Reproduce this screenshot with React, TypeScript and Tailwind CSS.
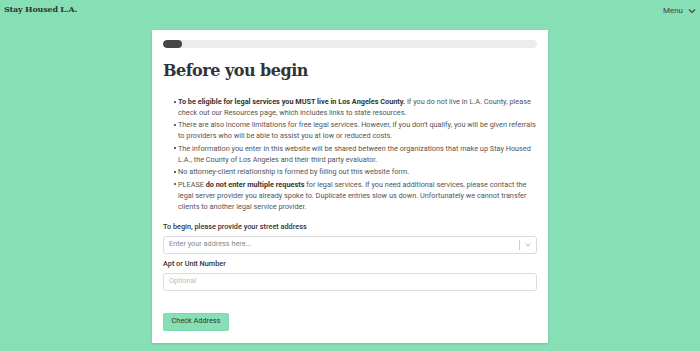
import React from "react";

function Li({ children, className = "" }: { children: React.ReactNode; className?: string }) {
  return (
    <li className={"flex " + className}>
      <span className="w-[4px] shrink-0 pt-[4.5px]">
        <span className="block h-[2px] w-[2px] rounded-full bg-[#333]" />
      </span>
      <span className="flex-1">{children}</span>
    </li>
  );
}

export default function App() {
  return (
    <div className="w-full min-h-[351px] bg-[#87dfb6] pb-[9px]" style={{ fontFamily: "Roboto, 'Liberation Sans', sans-serif" }}>
      <div className="flex h-[30px] items-start justify-between pl-[4px] pr-[4px] pt-[3px]">
        <div className="text-[8px] font-bold text-[#333] tracking-[-0.2px]" style={{ fontFamily: "'DejaVu Serif', 'Liberation Serif', serif" }}>
          Stay Housed L.A.
        </div>
        <div className="flex items-center gap-[5px] pt-[2px] text-[8px] text-[#444]">
          <span>Menu</span>
          <svg width="8" height="6" viewBox="0 0 8 6" fill="none" stroke="#444" strokeWidth="1.2">
            <path d="M1 1.5 L4 4.5 L7 1.5" />
          </svg>
        </div>
      </div>
      <div className="mx-auto w-[396px] bg-white px-[11px] pt-[10px] pb-[12px] shadow-[0_1px_2px_rgba(0,0,0,0.15)]">
        <div className="h-[8px] w-full overflow-hidden rounded-full bg-[#ececec]">
          <div className="h-full w-[19px] rounded-full bg-[#464646]" />
        </div>
        <h1 className="mt-[11px] text-[16px] font-bold leading-[24px] text-[#333] tracking-[-0.5px]" style={{ fontFamily: "'DejaVu Serif', 'Liberation Serif', serif" }}>
          Before you begin
        </h1>
        <ul className="mt-[13px] pl-[11px] text-[7.3px] leading-[11px] text-[#555]">
          <Li className="mb-[1.4px]">
            <b className="font-bold text-[#333]">To be eligible for legal services you MUST live in Los Angeles County.</b> If you do not live in L.A. County, please check out our Resources page, which includes links to state resources.
          </Li>
          <Li className="mb-[1.4px]">
            There are also income limitations for free legal services. However, if you don't qualify, you will be given referrals to providers who will be able to assist you at low or reduced costs.
          </Li>
          <Li className="mb-[1.4px]">
            The information you enter in this website will be shared between the organizations that make up Stay Housed L.A., the County of Los Angeles and their third party evaluator.
          </Li>
          <Li className="mb-[1.4px]">No attorney-client relationship is formed by filling out this website form.</Li>
          <Li>
            PLEASE <b className="font-bold text-[#333]">do not enter multiple requests</b> for legal services. If you need additional services, please contact the legal server provider you already spoke to. Duplicate entries slow us down. Unfortunately we cannot transfer clients to another legal service provider.
          </Li>
        </ul>
        <div className="mt-[9px] text-[7.3px] font-medium leading-[11px] text-[#333]">To begin, please provide your street address</div>
        <div className="mt-[4px] flex h-[18px] items-center rounded-[3px] border border-[#dcdcdc] pl-[5px] text-[7.3px] text-[#888]">
          <span className="flex-1">Enter your address here...</span>
          <span className="h-[10px] w-px bg-[#ccc]" />
          <span className="flex w-[16px] justify-center">
            <svg width="6" height="4" viewBox="0 0 6 4" fill="none" stroke="#aaa" strokeWidth="1">
              <path d="M0.5 0.5 L3 3 L5.5 0.5" />
            </svg>
          </span>
        </div>
        <div className="mt-[4px] text-[7.3px] font-medium leading-[11px] text-[#333]">Apt or Unit Number</div>
        <div className="mt-[4px] flex h-[18px] items-center rounded-[3px] border border-[#dcdcdc] pl-[5px] text-[7.3px] text-[#bbb]">
          Optional
        </div>
        <button className="mt-[22px] flex h-[18px] w-[66px] items-center justify-center rounded-[2px] border border-[#7dd6ac] bg-[#86dfb5] text-[7.3px] text-[#333]">
          Check Address
        </button>
      </div>
    </div>
  );
}
